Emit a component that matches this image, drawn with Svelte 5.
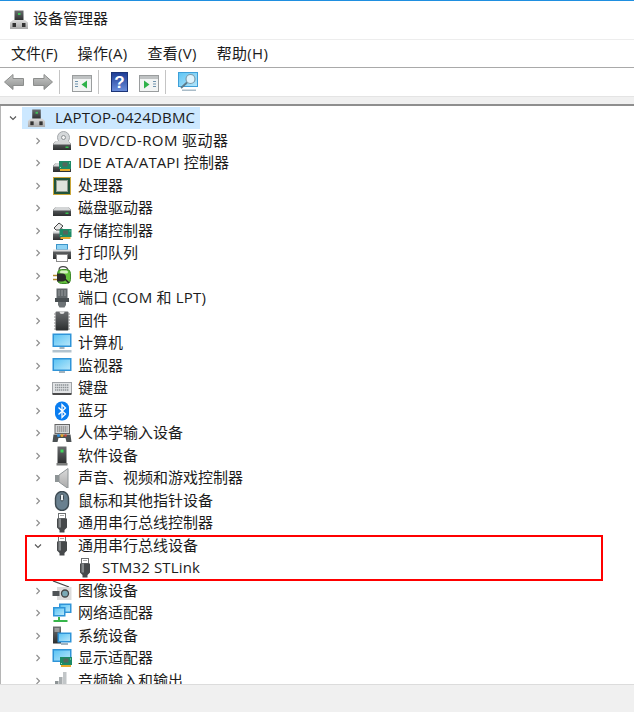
<script lang="ts">
  const menus = ['文件(F)', '操作(A)', '查看(V)', '帮助(H)'];

  const rows = [
    { label: 'DVD/CD-ROM 驱动器', icon: 'dvd', track: 0.4 },
    { label: 'IDE ATA/ATAPI 控制器', icon: 'ide', track: 0.1 },
    { label: '处理器', icon: 'cpu' },
    { label: '磁盘驱动器', icon: 'disk' },
    { label: '存储控制器', icon: 'storage' },
    { label: '打印队列', icon: 'printer' },
    { label: '电池', icon: 'battery' },
    { label: '端口 (COM 和 LPT)', icon: 'port', track: 0.2 },
    { label: '固件', icon: 'firmware' },
    { label: '计算机', icon: 'computer' },
    { label: '监视器', icon: 'monitor' },
    { label: '键盘', icon: 'keyboard' },
    { label: '蓝牙', icon: 'bluetooth' },
    { label: '人体学输入设备', icon: 'hid' },
    { label: '软件设备', icon: 'software' },
    { label: '声音、视频和游戏控制器', icon: 'sound' },
    { label: '鼠标和其他指针设备', icon: 'mouse' },
    { label: '通用串行总线控制器', icon: 'usb' },
    { label: '通用串行总线设备', icon: 'usb', open: true },
    { label: 'STM32 STLink', icon: 'usb', child: true, track: 0.15 },
    { label: '图像设备', icon: 'camera' },
    { label: '网络适配器', icon: 'network' },
    { label: '系统设备', icon: 'system' },
    { label: '显示适配器', icon: 'display' },
    { label: '音频输入和输出', icon: 'audio' }
  ];
</script>

{#snippet host(size: number)}
  <svg class="host" width={size} height={size} viewBox="0 0 20 20">
    <rect x="5.5" y="0.5" width="9" height="10" fill="url(#dark)" />
    <rect x="9" y="3" width="2.5" height="2" fill="#3fc25a" />
    <path d="M4 10h12l3 2.5V19H1v-6.500z" fill="url(#steel)" />
    <rect x="3.5" y="13" width="3.5" height="4" fill="#333" />
    <rect x="13" y="13" width="3.5" height="4" fill="#333" />
  </svg>
{/snippet}

{#snippet drive()}
  <path d="M1 13l2.500-3h13L19 13v6H1z" fill="url(#dark)" />
  <path d="M3.500 10h13L19 13.500H1z" fill="#d4d6d7" />
  <rect x="13.5" y="15.5" width="3" height="1.5" fill="#35c04d" />
{/snippet}

{#snippet card(x: number, y: number)}
  <g transform="translate({x} {y})">
    <rect x="0" y="0" width="12" height="8" fill="#1d8a66" />
    <rect x="3.5" y="1.5" width="5" height="4" fill="#52675c" />
    <path d="M1 6.500h1M10 2h1" stroke="#9fe0c0" />
    <rect x="1" y="8" width="10" height="2" fill="#e6ab2e" />
  </g>
{/snippet}

{#snippet screen(x: number, y: number, w: number, h: number)}
  <rect x={x} y={y} width={w} height={h} fill="#2f94d8" />
  <rect x={x + 1.5} y={y + 1.5} width={w - 3} height={h - 3} fill="url(#sky)" />
{/snippet}

{#snippet icon(name: string)}
  <svg class="icon" width="20" height="20" viewBox="0 0 20 20">
    {#if name === 'dvd'}
      <circle cx="11.5" cy="6.5" r="6" fill="#d5d8da" stroke="#a5a9ac" />
      <circle cx="11.5" cy="6.5" r="2" fill="#f4f4f4" stroke="#8d9194" />
      {@render drive()}
    {:else if name === 'ide'}
      {@render drive()}
      {@render card(7, 8)}
    {:else if name === 'cpu'}
      <rect x="1" y="1" width="18" height="18" fill="#c9a63a" />
      <rect x="2" y="2" width="16" height="16" fill="#21543a" />
      <rect x="4.5" y="4.5" width="11" height="11" fill="#dfe3dc" stroke="#8f9a8f" />
    {:else if name === 'disk'}
      <g transform="translate(0 -1)">{@render drive()}</g>
    {:else if name === 'storage'}
      <path d="M2 7l5-5 4 3-2.500 2.500L13 9H4z" fill="#e6e6e6" stroke="#444" />
      <path d="M1 12h10v7H1z" fill="url(#dark)" />
      <rect x="1" y="10.5" width="8" height="2" fill="#d4d6d7" />
      {@render card(7.5, 8)}
    {:else if name === 'printer'}
      <rect x="4.5" y="1.5" width="11" height="5" fill="#8fd3f4" stroke="#3d95c9" />
      <path d="M1 7h18v9H1z" fill="url(#dark)" />
      <rect x="1" y="6.5" width="18" height="2" fill="#dcdcdc" />
      <rect x="4.5" y="11.5" width="11" height="7" fill="#fff" stroke="#8c8c8c" />
    {:else if name === 'battery'}
      <path d="M7 4c0-5 8-4 9 0" fill="none" stroke="#444" stroke-width="1.2" />
      <rect x="5.5" y="3.5" width="13" height="14" rx="4" fill="#64c23c" stroke="#3e8a2b" />
      <rect x="8" y="4.5" width="8" height="3" rx="1.5" fill="#d5f0c0" />
      <path d="M1 9.500h5M1 13.500h5" stroke="#b08a2a" stroke-width="1.5" />
      <path d="M5 7.500h5a4 4 0 0 1 4 4 4 4 0 0 1-4 4H5z" fill="#2a2a2a" />
      <path d="M13 13l4 4" stroke="#222" stroke-width="1.5" />
    {:else if name === 'port'}
      <rect x="4.5" y="0.5" width="11" height="10" fill="#61676a" />
      <path d="M7 2.500v5M10 2.500v5M13 2.500v5" stroke="#d0d3d5" stroke-dasharray="1 1" />
      <path d="M3 10h14v4H3z" fill="#494f52" />
      <path d="M6 14h8v3l-1.500 2.500h-5L6 17z" fill="#6d7376" />
    {:else if name === 'firmware'}
      <rect x="3.5" y="0.5" width="13" height="19" rx="1" fill="url(#dark)" />
      <path d="M2 3h2M2 6h2M2 9h2M2 12h2M2 15h2M2 18h2M16 3h2M16 6h2M16 9h2M16 12h2M16 15h2M16 18h2" stroke="#8a8a8a" />
      <path d="M7.500 .5a2.500 2.500 0 0 0 5 0z" fill="#e2e2e2" />
    {:else if name === 'computer'}
      {@render screen(0.5, 0.5, 19, 13.5)}
      <rect x="7.5" y="14" width="5" height="2" fill="#a4b4bf" />
      <rect x="0.5" y="17" width="19" height="2.5" fill="#b3c3ce" />
    {:else if name === 'monitor'}
      {@render screen(0.5, 2, 19, 13)}
      <rect x="7" y="15" width="6" height="2" fill="#a4b4bf" />
    {:else if name === 'keyboard'}
      <rect x="0.5" y="4.5" width="19" height="11" fill="#e2e4e6" stroke="#a0a4a8" />
      <path d="M3 7h14M3 9.500h14M3 12h14" stroke="#8d9296" stroke-width="1.3" stroke-dasharray="1.4 .6" />
      <rect x="0.5" y="15" width="19" height="2" fill="#4a4a4a" />
    {:else if name === 'bluetooth'}
      <rect x="3" y="0.5" width="14" height="19" rx="6.5" fill="#0a7df0" />
      <path d="M6.500 6.500l7 6.500-3.500 3.500V3.500l3.500 3.500-7 6.500" fill="none" stroke="#fff" stroke-width="1.3" />
    {:else if name === 'hid'}
      <rect x="3" y="1.5" width="14.5" height="9" fill="#d5d7d9" stroke="#666" />
      <path d="M5 4h10.500M5 6h10.500M5 8h10.500" stroke="#666" stroke-dasharray="1.4 .6" />
      <path d="M0.500 19l1-7.500h17l1 7.500h-5l-1-4H6.500l-1 4z" fill="#4b5053" />
      <circle cx="6.5" cy="12.5" r="1.5" fill="#2f8fe0" />
      <circle cx="10" cy="12.5" r="1.5" fill="#e0a52f" />
      <circle cx="13.5" cy="12.5" r="1.3" fill="#d04a3a" />
    {:else if name === 'software'}
      <rect x="5.5" y="0.5" width="9" height="17" fill="url(#dark)" />
      <rect x="8.5" y="3.5" width="3" height="3" fill="#3fd45a" />
      <rect x="4.5" y="17" width="11" height="2.5" fill="#7b7d7c" />
    {:else if name === 'sound'}
      <path d="M3 7h4v7H3z" fill="#8e9496" />
      <path d="M7 7l9-6.500v20L7 14z" fill="url(#steel)" stroke="#8e9496" />
    {:else if name === 'mouse'}
      <rect x="3.5" y="0.5" width="13" height="19" rx="6.5" fill="#69808f" stroke="#3d4a52" stroke-width="1.4" />
      <rect x="8.5" y="3" width="3" height="7" rx="1.5" fill="#e8edf0" stroke="#3d4a52" />
    {:else if name === 'usb'}
      <rect x="6.5" y="0.5" width="7" height="5" fill="#fff" stroke="#6d7072" />
      <path d="M8.500 2.500h1M10.500 2.500h1" stroke="#555" />
      <path d="M5 5.500h10v9l-2.500 2.500v2.500h-5V17L5 14.500z" fill="#46494b" />
      <rect x="6.5" y="5.5" width="2.5" height="9" fill="#84888a" />
    {:else if name === 'camera'}
      <path d="M1 0l16 6" stroke="#444" stroke-width="1.3" />
      <path d="M5 6h14.500v13H5z" fill="#dcdcdc" />
      <rect x="0.5" y="10" width="7" height="5" fill="#4f5356" />
      <circle cx="13" cy="12.5" r="3.5" fill="#7aa9b5" stroke="#444" stroke-width="1.3" />
    {:else if name === 'network'}
      {@render screen(7, 0.5, 12.5, 9.5)}
      {@render screen(1, 4, 12.5, 9.5)}
      <path d="M7 14v3M1.500 18h14" stroke="#37b54a" stroke-width="2" />
    {:else if name === 'system'}
      <rect x="1" y="0.5" width="8" height="17" fill="url(#dark)" />
      <path d="M2.500 3h5M2.500 5h5" stroke="#d5d5d5" />
      {@render screen(5.5, 6.5, 14, 10)}
      <rect x="9" y="17" width="7" height="2" fill="#a4b4bf" />
    {:else if name === 'display'}
      {@render screen(0.5, 1, 19, 13)}
      {@render card(8, 9)}
    {:else if name === 'audio'}
      <rect x="3" y="10" width="3.5" height="10" fill="#8e9496" />
      <rect x="7" y="6" width="3.5" height="14" fill="#a9aeb0" />
      <rect x="11" y="1" width="3.5" height="19" fill="#c2c6c8" />
    {/if}
  </svg>
{/snippet}

<svg class="defs" width="0" height="0">
  <defs>
    <linearGradient id="dark" x1="0" y1="0" x2="0" y2="1">
      <stop offset="0" stop-color="#6b6e70" />
      <stop offset="1" stop-color="#2c2e2f" />
    </linearGradient>
    <linearGradient id="steel" x1="0" y1="0" x2="0" y2="1">
      <stop offset="0" stop-color="#dcdcdc" />
      <stop offset="1" stop-color="#a8a8a8" />
    </linearGradient>
    <linearGradient id="sky" x1="0" y1="0" x2="1" y2="1">
      <stop offset="0" stop-color="#5cc4f4" />
      <stop offset="1" stop-color="#b6e6fa" />
    </linearGradient>
    <linearGradient id="arrow" x1="0" y1="0" x2="0" y2="1">
      <stop offset="0" stop-color="#c8c9c8" />
      <stop offset="1" stop-color="#8e908f" />
    </linearGradient>
    <linearGradient id="help" x1="0" y1="0" x2="0" y2="1">
      <stop offset="0" stop-color="#1c3c94" />
      <stop offset="1" stop-color="#6c8fdc" />
    </linearGradient>
  </defs>
</svg>

<div class="window">
  <header class="titlebar">
    {@render host(20)}
    <span class="title">设备管理器</span>
  </header>

  <nav class="menubar">
    {#each menus as menu}
      <span class="menu">{menu}</span>
    {/each}
  </nav>

  <div class="toolbar">
    <svg class="tool" width="20" height="20" viewBox="0 0 20 20">
      <path d="M.5 10L9 2.500V6.500h10.500v7H9v4z" fill="url(#arrow)" stroke="#8c8e8d" />
    </svg>
    <svg class="tool" width="20" height="20" viewBox="0 0 20 20">
      <path d="M19.500 10L11 2.500V6.500H.5v7H11v4z" fill="url(#arrow)" stroke="#8c8e8d" />
    </svg>
    <i class="sep"></i>
    <svg class="tool" width="20" height="20" viewBox="0 0 20 20">
      <rect x="0.5" y="3.5" width="19" height="16" fill="#f2f4f4" stroke="#9a9d9e" />
      <rect x="1" y="4" width="18" height="3" fill="#bfc2c3" />
      <path d="M3 9.500h3M3 12h3M3 14.500h3" stroke="#6f93ad" />
      <path d="M15 8.500v8l-5.500-4z" fill="#2fb24a" />
    </svg>
    <i class="sep"></i>
    <svg class="tool help" width="18" height="20" viewBox="0 0 18 20">
      <rect x="0.5" y="0.5" width="16" height="19" fill="url(#help)" stroke="#1c3477" />
      <text x="8.5" y="16" class="qmark">?</text>
    </svg>
    <svg class="tool" width="20" height="20" viewBox="0 0 20 20">
      <rect x="0.5" y="3.5" width="19" height="16" fill="#f2f4f4" stroke="#9a9d9e" />
      <rect x="1" y="4" width="18" height="3" fill="#bfc2c3" />
      <path d="M14 9.500h3M14 12h3M14 14.500h3" stroke="#6f93ad" />
      <path d="M5 8.500v8l5.500-4z" fill="#2fb24a" />
    </svg>
    <i class="sep"></i>
    <svg class="tool" width="20" height="20" viewBox="0 0 20 20">
      <rect x="0.5" y="0.5" width="19" height="14" fill="url(#sky)" stroke="#3f9fd8" />
      <circle cx="12.5" cy="7" r="4.5" fill="#dff3fc" stroke="#7d9aaa" stroke-width="1.2" />
      <path d="M9 10.500L3 16" stroke="#5c7a8a" stroke-width="1.8" />
      <rect x="4" y="17.5" width="14" height="1.5" fill="#a9bcc8" />
    </svg>
  </div>

  <div class="gap"></div>

  <main class="tree">
    <div class="row root">
      <svg class="chev open" width="8" height="8" viewBox="0 0 8 8">
        <path d="M1 2.500l3 3 3-3" />
      </svg>
      <div class="root-label">
        {@render host(19)}
        <span class="label root-text">LAPTOP-0424DBMC</span>
      </div>
    </div>
    {#each rows as row}
      <div class="row" class:child={row.child}>
        {#if !row.child}
          <svg class="chev" class:open={row.open} width="8" height="8" viewBox="0 0 8 8">
            {#if row.open}
              <path d="M1 2.500l3 3 3-3" />
            {:else}
              <path d="M2.500 1l3 3-3 3" />
            {/if}
          </svg>
        {/if}
        {@render icon(row.icon)}
        <span class="label" style:letter-spacing={row.track ? `${row.track}px` : null}>{row.label}</span>
      </div>
    {/each}
    <div class="callout"></div>
  </main>

  <footer class="statusbar"></footer>
</div>

<style>
  :global(body) {
    margin: 0;
    background: #fff;
  }

  .defs {
    display: block;
  }

  .window {
    width: 634px;
    height: 712px;
    display: flex;
    flex-direction: column;
    overflow: hidden;
    font-family: 'Open Sans', 'Noto Sans CJK SC', sans-serif;
    font-size: 15px;
    line-height: 20px;
    color: #1c1c1c;
    border-top: 1px solid #1f8fe0;
    box-sizing: border-box;
  }

  .titlebar {
    height: 38px;
    flex: none;
    display: flex;
    align-items: center;
    gap: 4px;
    padding-left: 9px;
    border-bottom: 1px solid #ededed;
  }

  .title {
    padding-bottom: 4px;
  }

  .menubar {
    flex: none;
    display: flex;
    align-items: center;
    gap: 20px;
    padding-left: 11px;
    padding-bottom: 1px;
    box-sizing: border-box;
    height: 28px;
    border-bottom: 1px solid #a9a9a9;
  }

  .menu + .menu {
    letter-spacing: 0.3px;
  }

  .toolbar {
    height: 28px;
    flex: none;
    display: flex;
    align-items: center;
    padding-left: 4px;
    border-bottom: 1px solid #e4e4e4;
  }

  .tool {
    flex: none;
    margin-right: 9px;
  }

  .sep {
    width: 1px;
    height: 24px;
    background: #c4c4c4;
    margin: 0 12px 0 -3px;
  }

  .tool.help {
    margin-right: 10px;
  }

  .gap {
    height: 7px;
    flex: none;
    background: #f0f0f0;
    border-bottom: 2px solid #8e8e8e;
  }

  .tree {
    flex: 1;
    min-height: 0;
    position: relative;
    overflow: hidden;
    border-left: 1px solid #b5b5b5;
    padding-top: 1px;
  }

  .row {
    height: 22.5px;
    display: flex;
    align-items: center;
    padding-left: 33px;
    white-space: nowrap;
  }

  .row.root {
    padding-left: 8px;
  }

  .row.child {
    padding-left: 74px;
  }

  .chev {
    flex: none;
    fill: none;
    stroke: #8c8c8c;
    stroke-width: 1.1;
  }

  .chev.open {
    stroke: #555;
  }

  .icon {
    flex: none;
    margin: 0 6px 0 10px;
  }

  .child .icon {
    margin-left: 0;
    margin-right: 7px;
  }

  .label {
    padding-bottom: 2px;
  }

  .root-text {
    letter-spacing: 0.15px;
  }

  .root-label {
    display: flex;
    align-items: center;
    gap: 9px;
    height: 22px;
    margin-left: 5px;
    padding: 0 5px 0 3px;
    background: #cce8ff;
  }

  .root-label .host {
    margin-left: 2px;
  }

  .callout {
    position: absolute;
    left: 24px;
    top: 429px;
    width: 574px;
    height: 42px;
    border: 2px solid #ff0000;
    pointer-events: none;
  }

  .statusbar {
    height: 27px;
    flex: none;
    background: #f0f0f0;
    border-top: 1px solid #dcdcdc;
  }

  .qmark {
    font-family: 'Liberation Sans', sans-serif;
    font-size: 17px;
    font-weight: 700;
    fill: #fff;
    text-anchor: middle;
  }
</style>
